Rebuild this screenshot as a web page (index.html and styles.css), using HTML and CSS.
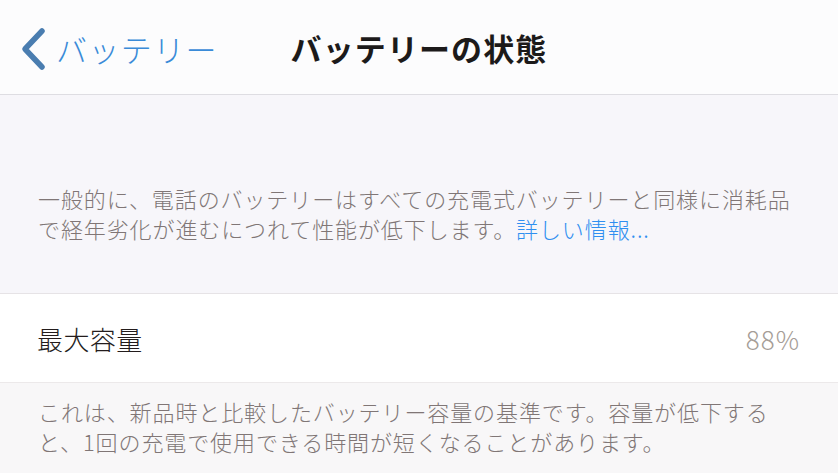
FILE: index.html
```html
<!DOCTYPE html>
<html lang="ja">
<head>
  <meta charset="UTF-8" />
  <meta name="viewport" content="width=device-width, initial-scale=1.0" />
  <title>バッテリーの状態</title>
  <link rel="stylesheet" href="styles.css">
</head>
<body>
  <header class="navbar">
    <a href="#" class="back-link">
      <svg class="chevron" width="26" height="44" viewBox="0 0 26 44">
        <path d="M22 4 L5 22 L22 40" fill="none" stroke="#4a7db0" stroke-width="5.5" stroke-linecap="round" stroke-linejoin="round"/>
      </svg>
      <span>バッテリー</span>
    </a>
    <h1>バッテリーの状態</h1>
  </header>

  <section class="note note-top">
    <p>一般的に、電話のバッテリーはすべての充電式バッテリーと同様に消耗品で経年劣化が進むにつれて性能が低下します。<a href="#" class="more">詳しい情報...</a></p>
  </section>

  <div class="row">
    <span class="row-label">最大容量</span>
    <span class="row-value">88%</span>
  </div>

  <section class="note note-bottom">
    <p>これは、新品時と比較したバッテリー容量の基準です。容量が低下すると、1回の充電で使用できる時間が短くなることがあります。</p>
  </section>
</body>
</html>
```

FILE: styles.css
```css
body {
  margin: 0;
  font-family: "Noto Sans CJK JP", "Noto Sans", sans-serif;
  background-color: #f8f7f8;
  overflow: hidden;
}
.navbar {
  position: relative;
  height: 94px;
  background-color: #fcfcfd;
  border-bottom: 1px solid #dedde2;
  display: flex;
  align-items: center;
  justify-content: center;
}
.back-link {
  position: absolute;
  left: 20px;
  top: 27px;
  display: flex;
  align-items: center;
  gap: 10px;
  color: #3a8bd8;
  text-decoration: none;
  font-size: 31px;
  font-weight: 300;
  letter-spacing: 1.4px;
  line-height: 44px;
}
.chevron {
  display: block;
}
.navbar h1 {
  margin: 0;
  font-size: 31px;
  font-weight: 700;
  color: #1c1a1a;
  letter-spacing: 1.1px;
}
.note {
  padding: 0 38px;
}
.note p {
  margin: 0;
  font-size: 22px;
  font-weight: 300;
  letter-spacing: 0.9px;
  line-height: 30px;
  color: #807676;
}
.note-top {
  background-color: #f7f6fa;
  padding-top: 88px;
  padding-bottom: 50px;
  height: 60px;
  border-bottom: 1px solid #e6e3e6;
}
.more {
  color: #2f8ff0;
  text-decoration: none;
}
.row {
  height: 88px;
  background-color: #ffffff;
  border-bottom: 1px solid #ece9ea;
  display: flex;
  align-items: center;
  justify-content: space-between;
  padding: 0 38px 0 37px;
}
.row-label {
  font-size: 26px;
  font-weight: 300;
  color: #231c1c;
  letter-spacing: 0.4px;
}
.row-value {
  font-size: 26px;
  font-weight: 300;
  color: #a59d97;
  letter-spacing: 1px;
}
.note-bottom {
  padding-top: 13px;
}
```
